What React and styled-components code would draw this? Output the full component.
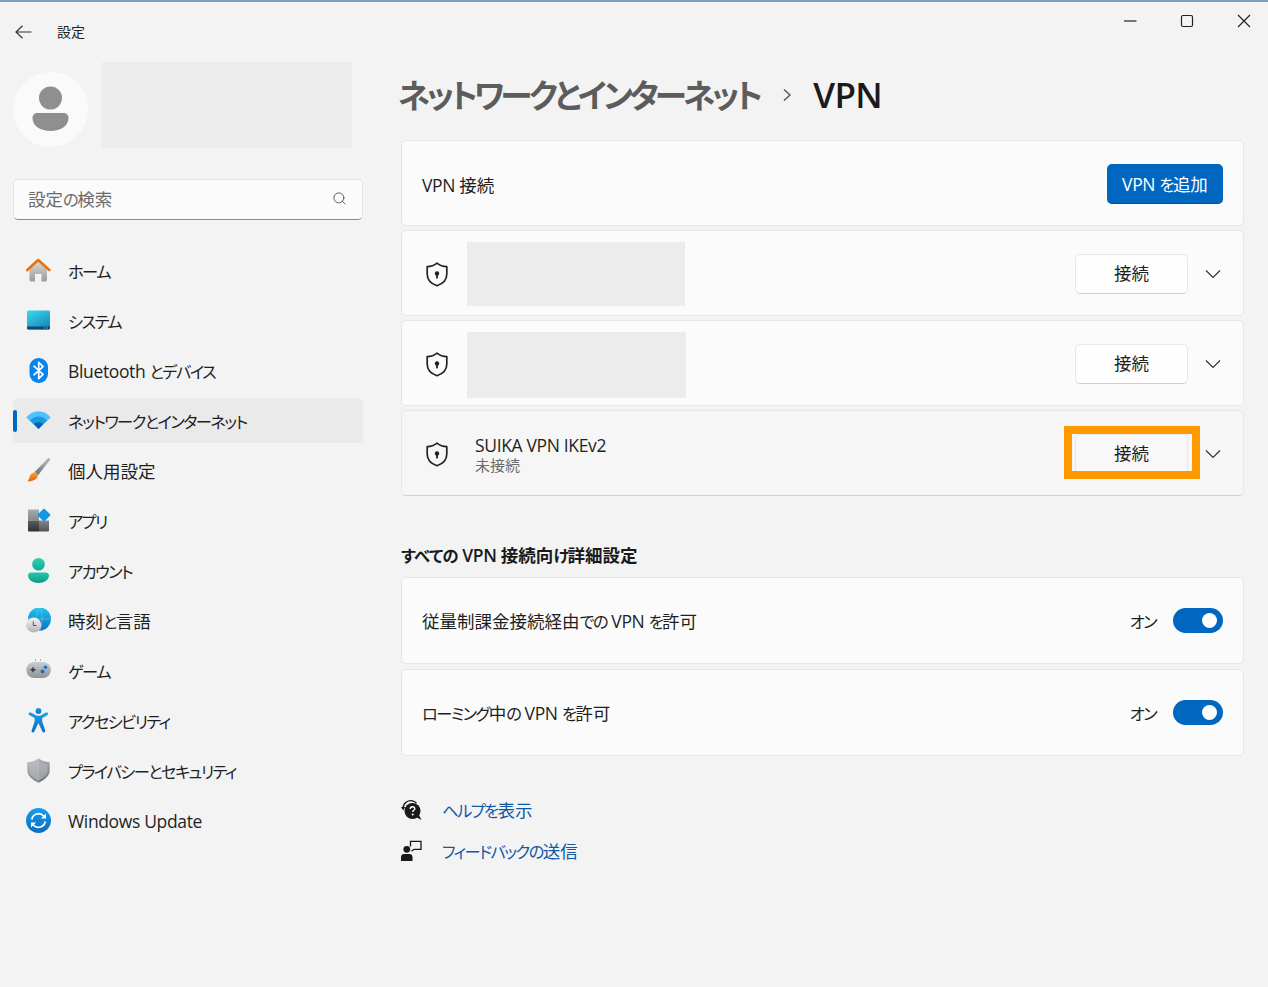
import React from "react";
import styled, { createGlobalStyle } from "styled-components";
import { Search } from "lucide-react";

const GlobalStyle = createGlobalStyle`
  html, body { margin: 0; padding: 0; background: #f3f3f3; }
  body {
    font-family: "Open Sans", "Noto Sans CJK JP", sans-serif;
    font-feature-settings: "palt";
    color: #1f1f1f;
  }
  * { box-sizing: border-box; }
`;

// the reference font has smaller, narrower kana than Noto, so runs get their own size
const Run = styled.span`
  font-size: ${(p) => (p.$kana ? "0.93em" : "1em")};
  letter-spacing: ${(p) => (p.$kana ? "-0.095em" : p.$latin ? "-0.02em" : "0")};
`;

const Jp = ({ children }) =>
  children
    .split(/([\u3040-\u30ff]+|[\x20-\x7e]+)/)
    .filter(Boolean)
    .map((part, i) => (
      <Run key={i} $kana={/^[\u3040-\u30ff]/.test(part)} $latin={/^[\x20-\x7e]/.test(part)}>
        {part}
      </Run>
    ));

const Window = styled.div`
  width: 1268px;
  height: 987px;
  overflow: hidden;
  display: flex;
  flex-direction: column;
  border-top: 2px solid #7c9fbd;
  background: #f3f3f3;
`;

const TopBar = styled.div`
  height: 60px;
  flex: none;
  display: flex;
  justify-content: space-between;
  align-items: flex-start;
`;

const BackGroup = styled.div`
  display: flex;
  align-items: center;
  gap: 25px;
  padding: 22px 0 0 15px;
  font-size: 14px;
  line-height: 16px;
`;

const WindowButtons = styled.div`
  display: flex;
  gap: 41px;
  padding: 11px 16px 0 0;
`;

const Body = styled.div`
  flex: 1;
  display: grid;
  grid-template-columns: 401px 1fr;
`;

const Sidebar = styled.aside`
  padding-left: 13px;
  width: 376px;
`;

const Profile = styled.div`
  display: flex;
  gap: 14px;
  height: 86px;
`;

const Avatar = styled.div`
  width: 75px;
  height: 75px;
  margin-top: 10px;
  flex: none;
`;

const Blank = styled.div`
  width: ${(p) => p.$w}px;
  height: ${(p) => p.$h}px;
  margin-top: ${(p) => p.$mt || 0}px;
  background: #ececec;
  flex: none;
`;

const SearchBox = styled.div`
  margin-top: 31px;
  width: 350px;
  height: 41px;
  background: #fbfbfb;
  border: 1px solid #e5e5e5;
  border-bottom: 1px solid #8a8a8a;
  border-radius: 5px;
  display: flex;
  align-items: center;
  justify-content: space-between;
  padding: 0 15px 2px 14px;
  font-size: 17.5px;
  color: #6b6b6b;
`;

const Nav = styled.nav`
  margin-top: 28px;
  width: 350px;
  display: flex;
  flex-direction: column;
  gap: 5px;
`;

const NavItem = styled.div`
  position: relative;
  height: 45px;
  display: flex;
  align-items: center;
  gap: 17px;
  padding-left: 13px;
  border-radius: 5px;
  font-size: 17.5px;
  background: ${(p) => (p.$active ? "#eaeaea" : "transparent")};

  &::before {
    content: "";
    display: ${(p) => (p.$active ? "block" : "none")};
    position: absolute;
    left: 0;
    top: 12px;
    width: 4px;
    height: 22px;
    border-radius: 2px;
    background: #0067c0;
  }
`;

const Main = styled.main`
  padding-right: 24px;
`;

const Title = styled.h1`
  margin: 0 0 0 -3px;
  height: 78px;
  padding: 0 0 12px;
  display: flex;
  align-items: center;
  font-size: 35px;
  font-weight: 600;
  line-height: 52px;
`;

const Crumb = styled.span`
  color: ${(p) => (p.$current ? "#1a1a1a" : "#5c5c5c")};

  ${Run} {
    letter-spacing: ${(p) => (p.$current ? "-0.02em" : "-0.112em")};
  }
`;

const CrumbSep = styled.span`
  display: flex;
  margin: 0 21px 0 24px;
`;

const CardStack = styled.div`
  display: flex;
  flex-direction: column;
  gap: ${(p) => p.$gap}px;
`;

const Card = styled.div`
  height: ${(p) => p.$h}px;
  display: flex;
  align-items: center;
  padding: ${(p) => p.$top || 0}px ${(p) => p.$right || 20}px 0 ${(p) => p.$left || 20}px;
  background: ${(p) => (p.$hover ? "#f6f6f6" : "#fbfbfb")};
  border: 1px solid #e6e6e6;
  border-bottom-color: ${(p) => (p.$hover ? "#d0d0d0" : "#e6e6e6")};
  border-radius: 5px;
  font-size: 17.5px;
`;

const ShieldSlot = styled.div`
  width: 22px;
  display: flex;
  flex: none;
  margin-right: 19px;
`;

const Spacer = styled.div`
  flex: 1;
`;

const ConnName = styled.div`
  margin-left: 8px;
  font-size: 17.5px;
  line-height: 22px;
`;

const ConnStatus = styled.div`
  margin-left: 8px;
  font-size: 15px;
  line-height: 19px;
  color: #6b6b6b;
`;

const AccentButton = styled.button`
  width: 116px;
  height: 40px;
  padding: 0;
  border: none;
  border-bottom: 1px solid #00509a;
  border-radius: 5px;
  background: #0067c0;
  color: #fff;
  font: inherit;
  font-size: 17.5px;
  font-feature-settings: "palt";
`;

const ConnectWrap = styled.div`
  position: relative;
  margin-right: 17px;
`;

const ConnectButton = styled.button`
  display: block;
  width: 113px;
  height: 40px;
  padding: 0 0 3px;
  background: ${(p) => (p.$hover ? "#f8f8f8" : "#fefefe")};
  border: 1px solid #e8e8e8;
  border-bottom-color: #cfcfcf;
  border-radius: 5px;
  color: #1f1f1f;
  font: inherit;
  font-size: 17.5px;
`;

// the orange frame drawn on top of the screenshot
const Highlight = styled.div`
  position: absolute;
  left: -11px;
  right: -12px;
  top: -8px;
  bottom: -5px;
  border: 8px solid #ff9900;
  pointer-events: none;
`;

const Chevron = styled.div`
  width: 16px;
  display: flex;
  flex: none;
`;

const Heading = styled.h2`
  margin: 0;
  height: 81px;
  padding-top: 44px;
  font-size: 17.5px;
  line-height: 30px;
  font-weight: 600;
  color: #1a1a1a;

  ${Run}:first-child {
    letter-spacing: -0.03em;
  }
`;

const StateLabel = styled.span`
  margin-right: 17px;
`;

const Toggle = styled.div`
  width: 50px;
  height: 25px;
  border-radius: 13px;
  background: #0067c0;
  display: flex;
  align-items: center;
  justify-content: flex-end;
  padding-right: 6px;

  &::after {
    content: "";
    width: 15px;
    height: 15px;
    border-radius: 50%;
    background: #fff;
  }
`;

const Links = styled.div`
  margin-top: 33px;
  display: flex;
  flex-direction: column;
`;

const LinkRow = styled.div`
  height: 41px;
  display: flex;
  align-items: center;
  gap: 20px;
  font-size: 17.5px;
  color: #0f5aa5;
`;

const LinkIcon = styled.div`
  width: 21px;
  display: flex;
  flex: none;
`;

const Svg = ({ children, size = 25, w, h, ...rest }) => (
  <svg width={w || size} height={h || size} viewBox={`0 0 ${w || size} ${h || size}`} fill="none" style={{ flex: "none", display: "block" }} {...rest}>
    {children}
  </svg>
);

const Grad = ({ id, from, to, x2 = 0, y2 = 1 }) => (
  <linearGradient id={id} x1="0" y1="0" x2={x2} y2={y2}>
    <stop offset="0" stopColor={from} />
    <stop offset="1" stopColor={to} />
  </linearGradient>
);

const HomeIcon = () => (
  <Svg>
    <defs><Grad id="homeBody" from="#d9d9d9" to="#9c9c9c" /></defs>
    <path fillRule="evenodd" d="M3.5 10 12.2 2.5 21 10V22a1.4 1.4 0 0 1-1.4 1.4H15.5V16h-6.5v7.4H4.9A1.4 1.4 0 0 1 3.5 22Z" fill="url(#homeBody)" />
    <path d="M1.3 12 12.2 2 23.3 12" stroke="#e8720c" strokeWidth="2.6" strokeLinecap="round" strokeLinejoin="round" />
  </Svg>
);

const SystemIcon = () => (
  <Svg>
    <defs><Grad id="sys" from="#3adbe8" to="#1a88c4" x2="0.7" /></defs>
    <rect x="1" y="2.5" width="23" height="19" rx="1.5" fill="url(#sys)" />
    <path d="M1 18.5h23v1.6a1.4 1.4 0 0 1-1.4 1.4H2.4A1.4 1.4 0 0 1 1 20.1Z" fill="#0c4a72" />
    <path d="M18.5 20h1M21 20h1" stroke="#9fd4e8" strokeWidth="1" />
  </Svg>
);

const BluetoothIcon = () => (
  <Svg>
    <rect x="3.5" y="0" width="18.5" height="25" rx="9" fill="#0a84ea" />
    <path d="M8 8.2 17 16.4 12.7 20.6V4.4L17 8.6 8 16.8" stroke="#fff" strokeWidth="1.7" strokeLinejoin="round" strokeLinecap="round" />
  </Svg>
);

const WifiIcon = () => (
  <Svg>
    <path d="M0.2 9.5C7 1 18 1 24.8 9.5L12.5 21Z" fill="#4cc2ff" />
    <path d="M4 12.5C9 7 16 7 21 12.5L12.5 21Z" fill="#1d97e0" />
    <path d="M8 16C10.5 13.5 14.5 13.5 17 16L12.5 21Z" fill="#0a5cb0" />
  </Svg>
);

const BrushIcon = () => (
  <Svg>
    <defs>
      <Grad id="brushH" from="#a8acb0" to="#5c6066" x2="-0.4" />
      <Grad id="brushT" from="#f5a524" to="#e8600c" />
    </defs>
    <path d="M23.5.3c.8.5.8 1.2.3 2L12 17.2l-3.4-3.3L21.8.6c.5-.5 1.1-.6 1.7-.3Z" fill="url(#brushH)" />
    <path d="M8 14.6c2-.6 4 1 3.8 3.2-.3 3-3.6 5.6-10.8 5.6 1.5-1 2-2.2 2.5-4.2.5-2.2 2-4 4.5-4.6Z" fill="url(#brushT)" />
  </Svg>
);

const AppsIcon = () => (
  <Svg>
    <defs>
      <Grad id="appA" from="#a6aaae" to="#85898e" />
      <Grad id="appB" from="#5a5e63" to="#2e3034" />
      <Grad id="appC" from="#85898e" to="#4f5357" />
    </defs>
    <path d="M2 2.5a1 1 0 0 1 1-1h10v11H2Z" fill="url(#appA)" />
    <path d="M2 12.5h11v11H3a1 1 0 0 1-1-1Z" fill="url(#appB)" />
    <path d="M13 12.5h10v10a1 1 0 0 1-1 1h-9Z" fill="url(#appC)" />
    <rect x="13.2" y="2.2" width="9.6" height="9.6" rx="1" transform="rotate(45 18 7)" fill="#1296e8" />
  </Svg>
);

const AccountIcon = () => (
  <Svg>
    <defs>
      <Grad id="accH" from="#30d0b4" to="#12a893" />
      <Grad id="accB" from="#25c9ac" to="#0b9a86" />
    </defs>
    <circle cx="12.5" cy="6.3" r="6.3" fill="url(#accH)" />
    <path d="M2 17.5c0-2 1.4-3 3-3h15c1.6 0 3 1 3 3 0 4.5-5 7.5-10.5 7.5S2 22 2 17.5Z" fill="url(#accB)" />
  </Svg>
);

const TimeIcon = () => (
  <Svg>
    <defs>
      <Grad id="globe" from="#26c4ea" to="#0a6fc8" />
      <Grad id="clock" from="#f6f6f6" to="#b4b4b4" />
    </defs>
    <circle cx="13.5" cy="11" r="11.5" fill="url(#globe)" />
    <path d="M13.5 -.5c-3.5 3-3.5 20 0 23M13.5 -.5c3.5 3 3.5 20 0 23M2 11h23" stroke="#7fdcf2" strokeOpacity=".55" strokeWidth=".8" />
    <circle cx="7.7" cy="17" r="7.6" fill="url(#clock)" />
    <path d="M7.3 13.3v4.2h3" stroke="#555" strokeWidth="1" />
  </Svg>
);

const GameIcon = () => (
  <Svg>
    <defs><Grad id="pad" from="#c9cdd1" to="#8e9297" /></defs>
    <rect x="0.3" y="4" width="24.6" height="16" rx="8" fill="url(#pad)" />
    <path d="M4.5 11.8h5M7 9.3v5" stroke="#33373c" strokeWidth="1.4" />
    <circle cx="19.5" cy="9.3" r="1.7" fill="#1272d0" />
    <circle cx="16.5" cy="13.5" r="1.9" fill="#1272d0" />
    <path d="M9 2h1M14 2h1" stroke="#777" strokeWidth="1" />
  </Svg>
);

const AccessIcon = () => (
  <Svg>
    <defs><Grad id="acc" from="#18a0e8" to="#0a6fc4" /></defs>
    <circle cx="12.5" cy="2.9" r="2.9" fill="url(#acc)" />
    <path d="M3.2 4.8c-.9.7-.7 1.8.3 2.4L8.6 10v3.6l-3 9c-.4 1.2.4 2 1.3 2 .8 0 1.3-.5 1.6-1.3l3.9-8.4 3.9 8.4c.3.8.8 1.3 1.6 1.3.9 0 1.7-.8 1.3-2l-3-9V10l5-2.8c1-.6 1.2-1.7.4-2.4-.7-.6-1.4-.4-2.2 0l-4.2 2.4c-1.6.8-3.8.8-5.4 0L5.4 4.8c-.8-.4-1.5-.6-2.2 0Z" fill="url(#acc)" />
  </Svg>
);

const ShieldGreyIcon = () => (
  <Svg>
    <defs>
      <Grad id="shL" from="#c2c5c8" to="#7f8489" />
      <Grad id="shR" from="#a9adb1" to="#6c7075" />
    </defs>
    <path d="M12.5.3C9 3 5.5 4 1.3 4.2v8c0 5.4 4.4 9.3 11.2 12.5Z" fill="url(#shL)" />
    <path d="M12.5.3C16 3 19.5 4 23.7 4.2v8c0 5.4-4.4 9.3-11.2 12.5Z" fill="url(#shR)" />
    <path d="M12.5 3C9.5 5 6.5 6 3.4 6.2v6c0 4.3 3.4 7.5 9.1 10.2 5.7-2.7 9.1-5.9 9.1-10.2v-6C18.5 6 15.5 5 12.5 3Z" fill="#b9bcbf" fillOpacity=".6" />
  </Svg>
);

const UpdateIcon = () => (
  <Svg>
    <defs><Grad id="upd" from="#1a9cec" to="#0a6cc0" /></defs>
    <circle cx="12.5" cy="12.5" r="12.5" fill="url(#upd)" />
    <path d="M5.8 11.5A6.8 6.8 0 0 1 17.6 8l1.4 1.7M19.2 13.5A6.8 6.8 0 0 1 7.4 17L6 15.3" stroke="#fff" strokeWidth="1.8" />
    <path d="M20 5.6v5h-5ZM5 19.4v-5h5Z" fill="#fff" />
  </Svg>
);

const VpnShield = () => (
  <Svg w={22} h={25}>
    <path d="M11 1.2C8.3 3.4 5 4.6 1.2 4.7V12c0 5.6 3.6 9.6 9.8 11.8C17.2 21.6 20.8 17.6 20.8 12V4.7C17 4.6 13.7 3.4 11 1.2Z" stroke="#222" strokeWidth="1.7" strokeLinejoin="round" />
    <circle cx="11" cy="11.5" r="2.2" fill="#222" />
    <rect x="10.1" y="12" width="1.8" height="4.4" fill="#222" />
  </Svg>
);

const ChevronDown = () => (
  <Svg w={16} h={10}>
    <path d="M1 1.5 8 8.5 15 1.5" stroke="#333" strokeWidth="1.2" />
  </Svg>
);

const HelpIcon = () => (
  <Svg w={21} h={22}>
    <circle cx="11.5" cy="12" r="8" fill="#1a1a1a" />
    <path d="M15 18l5.5 3-2.5-5Z" fill="#1a1a1a" />
    <path d="M2 9.5C2 4 7 .8 11.5 1.8c1.7.4 3 1.1 4 2.2" stroke="#1a1a1a" strokeWidth="1.3" />
    <path d="M0 8h4.2L2.2 11.5Z" fill="#1a1a1a" />
    <path d="M9.2 10c0-3 4.8-3 4.6-.2-.1 1.5-2.1 1.5-2.1 3.2" stroke="#fff" strokeWidth="1.4" />
    <circle cx="11.7" cy="15.4" r="1" fill="#fff" />
  </Svg>
);

const FeedbackIcon = () => (
  <Svg w={21} h={22}>
    <circle cx="5.8" cy="9.3" r="3.4" fill="#1a1a1a" />
    <path d="M0 17c0-2 1.3-3 3-3h5.5c1.7 0 3 1 3 3v4H0Z" fill="#1a1a1a" />
    <path d="M9.5 6.5V1.3h10.5v8h-7l-2.5 2" stroke="#1a1a1a" strokeWidth="1.3" />
  </Svg>
);

const AvatarIcon = () => (
  <Svg size={75}>
    <circle cx="37.5" cy="37.5" r="37.5" fill="#fafafa" />
    <circle cx="37.5" cy="26" r="11.5" fill="#8f8f8f" />
    <path d="M19.5 46c0-3 2-5 5-5h26c3 0 5 2 5 5 0 8-8 13-18 13s-18-5-18-13Z" fill="#8f8f8f" />
  </Svg>
);

const navItems = [
  { label: "ホーム", icon: HomeIcon },
  { label: "システム", icon: SystemIcon },
  { label: "Bluetooth とデバイス", icon: BluetoothIcon },
  { label: "ネットワークとインターネット", icon: WifiIcon, active: true },
  { label: "個人用設定", icon: BrushIcon },
  { label: "アプリ", icon: AppsIcon },
  { label: "アカウント", icon: AccountIcon },
  { label: "時刻と言語", icon: TimeIcon },
  { label: "ゲーム", icon: GameIcon },
  { label: "アクセシビリティ", icon: AccessIcon },
  { label: "プライバシーとセキュリティ", icon: ShieldGreyIcon },
  { label: "Windows Update", icon: UpdateIcon },
];

const App = () => {
  return (
    <Window>
      <GlobalStyle />
      <TopBar>
        <BackGroup>
          <Svg w={17} h={14}>
            <path d="M16.5 7H1M7.5.8 1 7l6.5 6.2" stroke="#333" strokeWidth="1.2" />
          </Svg>
          <span>設定</span>
        </BackGroup>
        <WindowButtons>
          <Svg size={16}><path d="M2 8h12.5" stroke="#222" strokeWidth="1.2" /></Svg>
          <Svg size={16}><rect x="2.5" y="2.5" width="11" height="11" rx="1.5" stroke="#222" strokeWidth="1.2" /></Svg>
          <Svg size={16}><path d="M2 2l12 12M14 2 2 14" stroke="#222" strokeWidth="1.2" /></Svg>
        </WindowButtons>
      </TopBar>
      <Body>
        <Sidebar>
          <Profile>
            <Avatar><AvatarIcon /></Avatar>
            <Blank $w={250} $h={86} />
          </Profile>
          <SearchBox>
            <span><Jp>設定の検索</Jp></span>
            <Search size={15} strokeWidth={1.2} color="#333" />
          </SearchBox>
          <Nav>
            {navItems.map((item) => (
              <NavItem key={item.label} $active={item.active}>
                <item.icon />
                <span><Jp>{item.label}</Jp></span>
              </NavItem>
            ))}
          </Nav>
        </Sidebar>
        <Main>
          <Title>
            <Crumb><Jp>ネットワークとインターネット</Jp></Crumb>
            <CrumbSep>
              <Svg w={9} h={14}><path d="M1 1.5 7 7 1 12.5" stroke="#555" strokeWidth="1.4" /></Svg>
            </CrumbSep>
            <Crumb $current><Jp>VPN</Jp></Crumb>
          </Title>
          <CardStack $gap={4}>
            <Card $h={86} $top={2}>
              <span><Jp>VPN 接続</Jp></span>
              <Spacer />
              <AccentButton><Jp>VPN を追加</Jp></AccentButton>
            </Card>
            <Card $h={86} $top={2} $left={24} $right={22}>
              <ShieldSlot><VpnShield /></ShieldSlot>
              <Blank $w={218} $h={64} />
              <Spacer />
              <ConnectWrap><ConnectButton>接続</ConnectButton></ConnectWrap>
              <Chevron><ChevronDown /></Chevron>
            </Card>
            <Card $h={86} $top={2} $left={24} $right={22}>
              <ShieldSlot><VpnShield /></ShieldSlot>
              <Blank $w={219} $h={66} $mt={2} />
              <Spacer />
              <ConnectWrap><ConnectButton>接続</ConnectButton></ConnectWrap>
              <Chevron><ChevronDown /></Chevron>
            </Card>
            <Card $h={86} $top={2} $left={24} $right={22} $hover>
              <ShieldSlot><VpnShield /></ShieldSlot>
              <div>
                <ConnName><Jp>SUIKA VPN IKEv2</Jp></ConnName>
                <ConnStatus>未接続</ConnStatus>
              </div>
              <Spacer />
              <ConnectWrap>
                <ConnectButton $hover>接続</ConnectButton>
                <Highlight />
              </ConnectWrap>
              <Chevron><ChevronDown /></Chevron>
            </Card>
          </CardStack>
          <Heading><Jp>すべての VPN 接続向け詳細設定</Jp></Heading>
          <CardStack $gap={5}>
            <Card $h={87}>
              <span><Jp>従量制課金接続経由での VPN を許可</Jp></span>
              <Spacer />
              <StateLabel><Jp>オン</Jp></StateLabel>
              <Toggle />
            </Card>
            <Card $h={87}>
              <span><Jp>ローミング中の VPN を許可</Jp></span>
              <Spacer />
              <StateLabel><Jp>オン</Jp></StateLabel>
              <Toggle />
            </Card>
          </CardStack>
          <Links>
            <LinkRow>
              <LinkIcon><HelpIcon /></LinkIcon>
              <span><Jp>ヘルプを表示</Jp></span>
            </LinkRow>
            <LinkRow>
              <LinkIcon><FeedbackIcon /></LinkIcon>
              <span><Jp>フィードバックの送信</Jp></span>
            </LinkRow>
          </Links>
        </Main>
      </Body>
    </Window>
  );
};

export default App;
